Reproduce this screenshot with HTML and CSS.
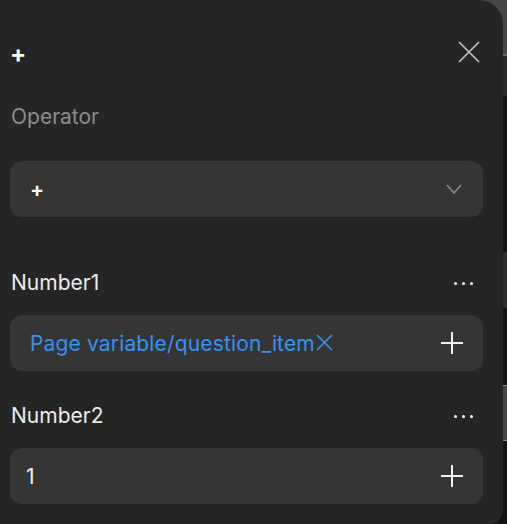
FILE: index.html
```html
<!DOCTYPE html>
<html>
<head>
<meta charset="utf-8">
<link rel="stylesheet" href="styles.css">
</head>
<body>
<div class="panel">
  <div class="header">
    <span class="title">+</span>
    <svg class="close" width="22" height="22" viewBox="0 0 22 22"><path d="M1 1L21 21M21 1L1 21" stroke="#c8c8c8" stroke-width="1.6" fill="none"/></svg>
  </div>
  <div class="label muted">Operator</div>
  <div class="box select">
    <span class="op">+</span>
    <svg width="16" height="10" viewBox="0 0 16 10"><path d="M1 1L8 9L15 1" stroke="#8a8a8a" stroke-width="1.5" fill="none"/></svg>
  </div>
  <div class="field-head first">
    <span class="label">Number1</span>
    <span class="dots"><i></i><i></i><i></i></span>
  </div>
  <div class="box">
    <span class="var">Page variable/question_item<svg class="x" width="17" height="17" viewBox="0 0 17 17"><path d="M1 1L16 16M16 1L1 16" stroke="#3592f3" stroke-width="1.6" fill="none"/></svg></span>
    <svg width="22" height="22" viewBox="0 0 22 22"><path d="M11 0V22M0 11H22" stroke="#f0f0f0" stroke-width="2" fill="none"/></svg>
  </div>
  <div class="field-head">
    <span class="label">Number2</span>
    <span class="dots"><i></i><i></i><i></i></span>
  </div>
  <div class="box num">
    <span class="val">1</span>
    <svg width="22" height="22" viewBox="0 0 22 22"><path d="M11 0V22M0 11H22" stroke="#f0f0f0" stroke-width="2" fill="none"/></svg>
  </div>
</div>
</body>
</html>
```
FILE: styles.css
```css
html, body {
  margin: 0;
  padding: 0;
}
body {
  width: 507px;
  height: 524px;
  overflow: hidden;
  font-family: Inter, "Noto Sans", sans-serif;
  background: linear-gradient(to bottom,
    #474747 0, #474747 54px, #6a6a6a 54px, #6a6a6a 56px,
    #2a2a2a 56px, #2a2a2a 96px, #141414 96px, #141414 252px,
    #2d2d2d 252px, #2d2d2d 308px, #141414 308px, #141414 385px,
    #8a8a8a 385px, #8a8a8a 386px, #474747 386px, #474747 440px,
    #8a8a8a 440px, #8a8a8a 441px, #141414 441px, #141414 100%);
}
.panel {
  width: 503px;
  height: 524px;
  box-sizing: border-box;
  background: #252525;
  border-radius: 0 24px 14px 0;
  padding: 32px 20px 0 10px;
}
.header {
  height: 40px;
  display: flex;
  align-items: center;
  justify-content: space-between;
}
.title {
  color: #fff;
  font-size: 24px;
  font-weight: 700;
  line-height: 24px;
  margin-top: 4px;
}
.close {
  margin-right: 3px;
}
.label {
  font-size: 21px;
  line-height: 28px;
  color: #ececec;
  padding-left: 1px;
}
.muted {
  color: #8c8c8c;
  margin-top: 31px;
}
.box {
  height: 56px;
  box-sizing: border-box;
  background: #353535;
  border-radius: 12px;
  display: flex;
  align-items: center;
  justify-content: space-between;
  padding: 0 20px 0 20px;
}
.select {
  margin-top: 30px;
  padding-right: 21px;
}
.op {
  color: #fff;
  font-size: 21px;
  font-weight: 600;
}
.field-head {
  display: flex;
  align-items: center;
  justify-content: space-between;
  margin-top: 31px;
  margin-bottom: 18px;
}
.field-head.first {
  margin-top: 52px;
}
.dots {
  display: flex;
  gap: 5px;
  margin-right: 10px;
}
.dots i {
  width: 3px;
  height: 3px;
  border-radius: 50%;
  background: #fff;
}
.var {
  color: #3592f3;
  font-size: 21px;
  letter-spacing: 0.15px;
  display: flex;
  align-items: center;
}
.x {
  margin-left: 1px;
  margin-top: -2px;
}
.num {
  padding-left: 16px;
}
.val {
  color: #f0f0f0;
  font-size: 21px;
}
```
